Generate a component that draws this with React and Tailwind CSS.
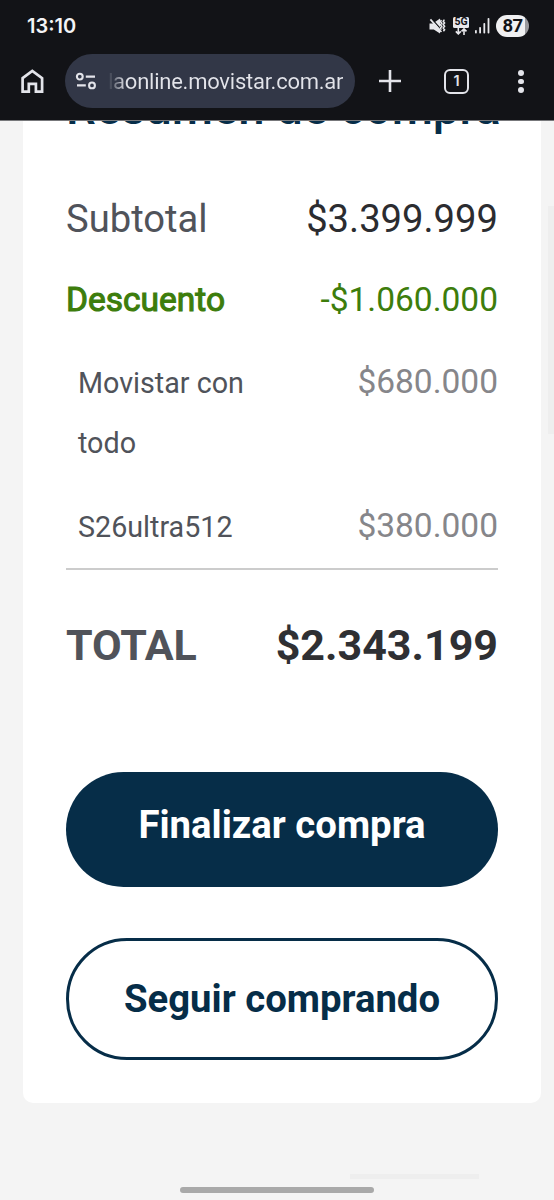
import React from 'react';

const DISCOUNTS = [
  { id: 1, name: 'Movistar con todo', amount: '$680.000' },
  { id: 2, name: 'S26ultra512', amount: '$380.000' },
];

function MuteIcon() {
  return (
    <svg width="17" height="18" viewBox="0 0 17 18" fill="none">
      <path d="M.5 6.4h3.4L11 1.6v15L4.8 12.4H.5z" fill="#e8e8ec" />
      <path d="M3 2.2l10 11.2" stroke="#121317" strokeWidth="1.3" />
      <path d="M1.4 2.4l11 12.6" stroke="#e8e8ec" strokeWidth="1.7" />
      <path d="M12.4 3l-1 1.6 1.4 1.6-1.4 1.6 1.4 1.6-1.4 1.6 1 1.6M15.4 2.6l-1.2 1.6 1.4 1.7-1.4 1.7 1.4 1.7-1.4 1.7 1.4 1.7-1.2 1.6" stroke="#e8e8ec" strokeWidth="1.5" />
    </svg>
  );
}

function NetworkIcon() {
  return (
    <div className="flex w-4 flex-col items-center">
      <span className="flex h-[11px] w-4 items-center justify-center rounded-[1.5px] bg-[#e8e8ec] font-[Roboto,sans-serif] text-[10.5px] leading-none font-bold text-[#121317]">
        5G
      </span>
      <svg width="14" height="7" viewBox="0 0 14 7" fill="none" stroke="#e8e8ec" strokeWidth="1.6">
        <path d="M4.3 0v6M1.8 3.4l2.5 2.5 2.5-2.5M10 7V1M7.5 3.4L10 .9l2.5 2.5" />
      </svg>
    </div>
  );
}

function SignalIcon() {
  return (
    <svg width="15" height="16" viewBox="0 0 15 16" fill="#e8e8ec">
      <rect x="0" y="12" width="1.8" height="3.5" rx=".8" />
      <rect x="4.2" y="9" width="1.8" height="6.5" rx=".8" />
      <rect x="8.4" y="5" width="1.8" height="10.5" rx=".8" />
      <rect x="12.6" y="0" width="1.8" height="15.5" rx=".8" />
    </svg>
  );
}

function StatusBar() {
  return (
    <div className="flex h-[52px] items-center justify-between pr-[25px] pl-[27px] font-[Inter,sans-serif]">
      <span className="text-[20px] leading-none font-semibold text-[#f4f4f6]">13:10</span>
      <div className="flex items-center">
        <MuteIcon />
        <div className="ml-[7px]">
          <NetworkIcon />
        </div>
        <div className="ml-[6px]">
          <SignalIcon />
        </div>
        <div className="ml-[6px] flex h-[22px] w-[33px] items-center justify-center overflow-hidden rounded-full bg-[linear-gradient(to_right,#f0f0f2_87%,#9a9a9e_87%)] font-[Roboto,sans-serif] text-[18.5px] leading-none font-bold tracking-[-0.5px] text-[#121317]">
          87
        </div>
      </div>
    </div>
  );
}

function BrowserBar() {
  return (
    <div className="mt-[2px] flex h-[65px] pl-5">
      <svg className="mt-[14px]" width="24" height="26" viewBox="0 0 24 26" fill="none" stroke="#e3e4ea" strokeWidth="2.7">
        <path d="M2.6 10.2L12.3 2.9l9.8 7.3v13.4h-6.2v-7.8H8.8v7.8H2.6z" />
      </svg>
      <div className="ml-[21px] flex h-[54px] w-[290px] items-center rounded-full bg-[#323747]">
        <svg className="ml-[10px]" width="22" height="18" viewBox="0 0 22 18" fill="none" stroke="#e3e4ea" strokeWidth="2.1">
          <circle cx="4.8" cy="4.6" r="2.9" />
          <path d="M10.8 4.6H20M2 13.4h8.8" />
          <circle cx="17" cy="13.4" r="2.9" />
        </svg>
        <span className="ml-[11px] bg-[linear-gradient(to_right,#323747_0px,#e3e4ea_18px)] bg-clip-text pt-px font-[Roboto,sans-serif] text-[22px] leading-[28px] tracking-[-0.24px] whitespace-nowrap text-transparent">
          laonline.movistar.com.ar
        </span>
      </div>
      <svg className="mt-4 ml-6" width="22" height="22" viewBox="0 0 22 22" stroke="#e3e4ea" strokeWidth="2.6">
        <path d="M11 0v22M0 11h22" />
      </svg>
      <div className="mt-[15px] ml-[43px] flex size-[25px] items-center justify-center rounded-[6px] border-[2.5px] border-[#e3e4ea] font-[Inter,sans-serif] text-[14.5px] leading-none font-semibold text-[#e3e4ea]">
        1
      </div>
      <div className="mt-4 ml-[49px] flex flex-col gap-[3px]">
        <span className="size-[5.5px] rounded-full bg-[#e3e4ea]" />
        <span className="size-[5.5px] rounded-full bg-[#e3e4ea]" />
        <span className="size-[5.5px] rounded-full bg-[#e3e4ea]" />
      </div>
    </div>
  );
}

function Summary() {
  return (
    <main className="mr-[13px] ml-[22.5px] flex h-[982px] flex-col rounded-b-[10px] bg-white pr-[43px] pl-[43.5px]">
      {/* Title, scrolled under the browser bar */}
      <div className="-mr-6 flex h-[20px] items-end overflow-hidden pb-[9px]">
        <h1 className="text-[47.3px] leading-[48px] font-medium whitespace-nowrap text-[#062d48]">Resumen de compra</h1>
      </div>

      <div className="mt-[49px] flex h-[60px] items-center justify-between text-[38.2px]">
        <span className="text-[#50535a]">Subtotal</span>
        <span className="text-[#2b2c30]">$3.399.999</span>
      </div>

      <div className="mt-[20px] flex h-[60px] items-center justify-between text-[33.5px] text-[#3d7d0c]">
        <span className="[-webkit-text-stroke:1.1px]">Descuento</span>
        <span>-$1.060.000</span>
      </div>

      <div className="mt-[22px] flex flex-col gap-[23px]">
        {DISCOUNTS.map((item) => (
          <div key={item.id} className="flex items-start justify-between pl-3 leading-[59.5px]">
            <span className="w-[190px] pt-[2px] text-[28.7px] text-[#50535a]">{item.name}</span>
            <span className="text-[33.5px] text-[#86868a]">{item.amount}</span>
          </div>
        ))}
      </div>

      <hr className="mt-[10px] border-t-2 border-[#cccccc]" />

      <div className="mt-[46px] flex h-[60px] items-center justify-between text-[43px] font-bold">
        <span className="text-[#50535a]">TOTAL</span>
        <span className="text-[#2f3033]">$2.343.199</span>
      </div>

      <button className="mt-[96px] flex h-[115px] shrink-0 items-center justify-center rounded-full bg-[#062d48] pb-[9px] text-[38.3px] font-bold text-white">
        Finalizar compra
      </button>
      <button className="mt-[51px] flex h-[122px] shrink-0 items-center justify-center rounded-full border-[3px] border-[#062d48] text-[38.3px] font-bold text-[#062d48]">
        Seguir comprando
      </button>
    </main>
  );
}

export default function App() {
  return (
    <div className="relative h-[1200px] w-[554px] overflow-hidden bg-[#f4f4f4] font-[Roboto,sans-serif]">
      <header className="h-[121px] border-b border-[#77787b] bg-[#121317]">
        <StatusBar />
        <BrowserBar />
      </header>
      <Summary />

      {/* Scroll indicators and gesture handle */}
      <div className="absolute top-[206px] right-0 h-[228px] w-[6px] bg-[#eeeeee]" />
      <div className="absolute top-[1174px] left-[350px] h-[5px] w-[129px] bg-[#eeeeee]" />
      <div className="absolute top-[1187px] left-[180px] h-[6px] w-[194px] rounded-full bg-[#a9a9a9]" />
    </div>
  );
}
